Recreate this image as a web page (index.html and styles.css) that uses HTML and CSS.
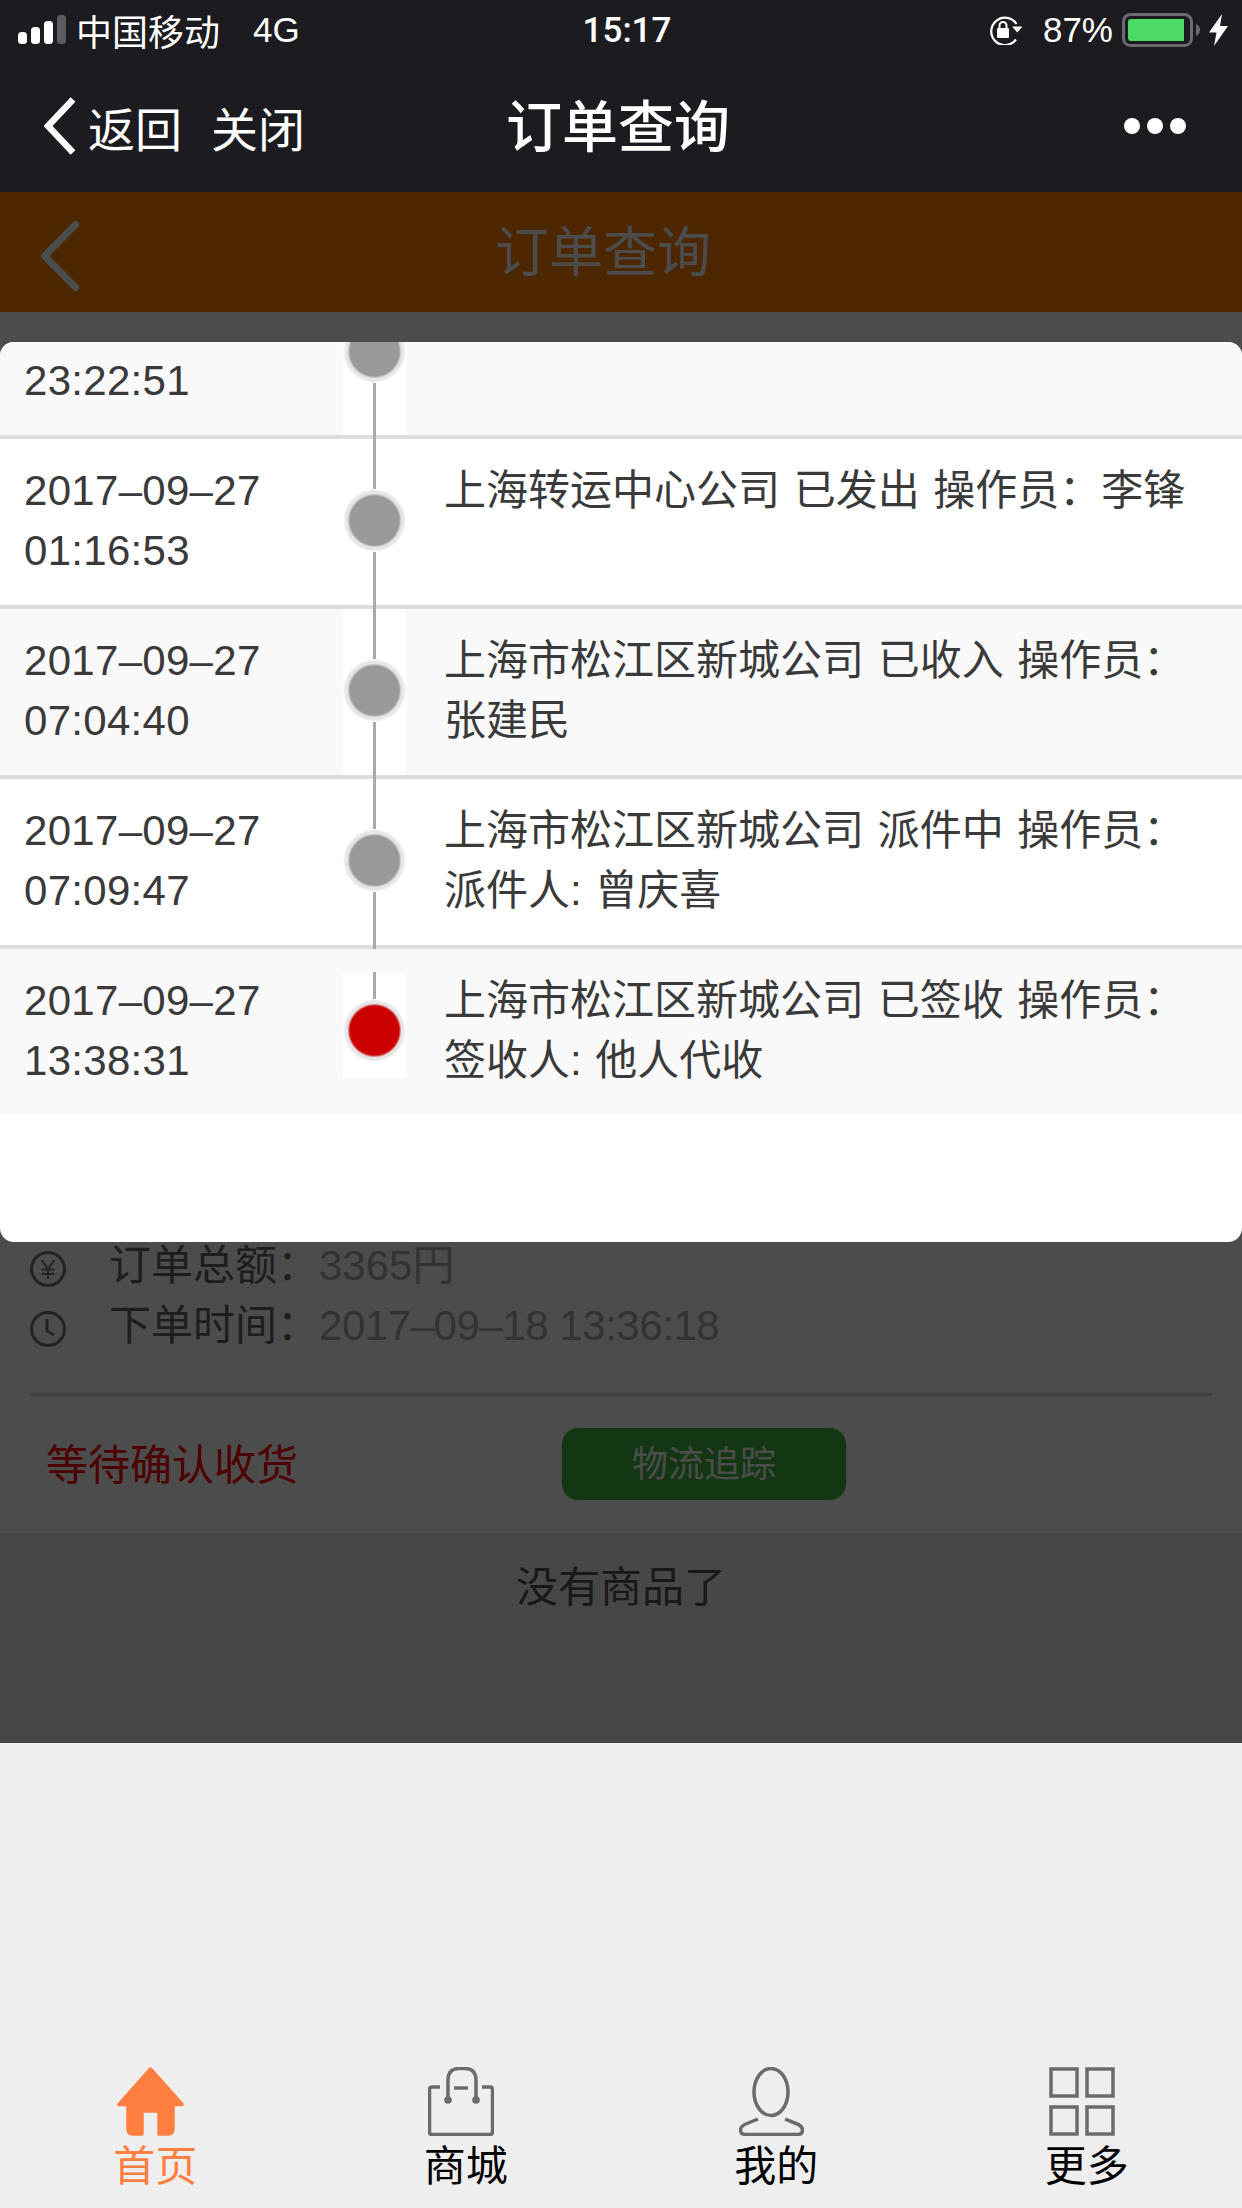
FILE: index.html
```html
<!DOCTYPE html>
<html lang="zh-CN">
<head>
    <meta charset="UTF-8">
    <meta name="viewport" content="width=device-width, initial-scale=1.0">
    <title>订单查询</title>
    <link rel="stylesheet" href="styles.css">
</head>
<body>
    <!-- 微信顶部 -->
    <div class="chrome">
        <div class="status_bar">
            <div class="status_left">
                <svg class="signal" width="48" height="30" viewBox="0 0 48 30">
                    <rect x="0" y="17" width="9" height="12" rx="3.5" fill="#fff"/>
                    <rect x="13" y="12" width="9" height="17" rx="3.5" fill="#fff"/>
                    <rect x="26" y="6" width="9" height="23" rx="3.5" fill="#fff"/>
                    <rect x="39" y="0" width="9" height="29" rx="3.5" fill="#5c5c60"/>
                </svg>
                <span class="carrier">中国移动</span>
                <span class="network">4G</span>
            </div>
            <div class="status_time">15:17</div>
            <div class="status_right">
                <svg class="rotate_lock" width="35" height="30" viewBox="0 0 35 30">
                    <path d="M28 24.5A13.7 13.7 0 1 1 28.5 9" fill="none" stroke="#fff" stroke-width="2.2"/>
                    <path d="M24 11.5h10.500l-5.200 6z" fill="#fff"/>
                    <rect x="9" y="13" width="12" height="10" rx="1" fill="#fff"/>
                    <path d="M11.500 13v-2.500a3.500 3.500 0 0 1 7 0V13" fill="none" stroke="#fff" stroke-width="2"/>
                </svg>
                <span class="battery_num">87%</span>
                <svg class="battery" width="78" height="34" viewBox="0 0 78 34">
                    <rect x="1.500" y="1.500" width="68" height="31" rx="7" fill="none" stroke="#6b6b6f" stroke-width="3"/>
                    <path d="M9 6h53v22H9a3 3 0 0 1-3-3V9a3 3 0 0 1 3-3z" fill="#4cd964"/>
                    <path d="M74 11c2.500 1 4 3 4 6s-1.500 5-4 6z" fill="#6b6b6f"/>
                </svg>
                <svg class="bolt" width="19" height="32" viewBox="0 0 19 32">
                    <path d="M13 0L0 18.500h7.500L5 32 19 12h-8z" fill="#fff"/>
                </svg>
            </div>
        </div>
        <div class="nav_bar">
            <div class="nav_left">
                <svg class="nav_back" width="32" height="58" viewBox="0 0 32 58">
                    <path d="M29 2.500L4 29l25 26.500" fill="none" stroke="#fff" stroke-width="6.500"/>
                </svg>
                <span class="nav_link back_text">返回</span>
                <span class="nav_link">关闭</span>
            </div>
            <div class="nav_title">订单查询</div>
            <div class="nav_more">
                <i></i><i></i><i></i>
            </div>
        </div>
    </div>

    <!-- 页面内容 -->
    <div class="page">
        <div class="header">
            <svg class="header_back" width="38" height="70" viewBox="0 0 38 70">
                <path d="M34.500 3.500L3.500 35l31 31.500" fill="none" stroke="#fff" stroke-width="7" stroke-linecap="round" stroke-linejoin="round"/>
            </svg>
            <div class="header_title">订单查询</div>
        </div>

        <div class="order">
            <div class="info_row">
                <svg class="info_icon" width="36" height="36" viewBox="0 0 36 36">
                    <circle cx="18" cy="18" r="16.500" fill="none" stroke="currentColor" stroke-width="3"/>
                    <path d="M11.500 9L18 18l6.500-9M18 18v10M11.500 18.500h13M11.500 23h13" fill="none" stroke="currentColor" stroke-width="2"/>
                </svg>
                <span class="info_label">订单总额：</span>
                <span class="info_value">3365円</span>
            </div>
            <div class="info_row">
                <svg class="info_icon" width="36" height="36" viewBox="0 0 36 36">
                    <circle cx="18" cy="18" r="16.500" fill="none" stroke="currentColor" stroke-width="3"/>
                    <path d="M17 8v12l7 4" fill="none" stroke="currentColor" stroke-width="3"/>
                </svg>
                <span class="info_label">下单时间：</span>
                <span class="info_value info_date">2017–09–18 13:36:18</span>
            </div>
            <div class="line"></div>
            <div class="state_row">
                <div class="state">等待确认收货</div>
                <div class="track_btn">物流追踪</div>
            </div>
        </div>

        <div class="no_more">没有商品了</div>

        <div class="tab_bar">
            <div class="tab tab_active">
                <svg class="tab_icon" width="67" height="69" viewBox="0 0 67 69">
                    <path d="M33.500 2L2 37.500h9V62q0 5 5 5h9V44h17v23h9q5 0 5-5V37.500h9z" fill="#ff7f40" stroke="#ff7f40" stroke-width="3.500" stroke-linejoin="round"/>
                </svg>
                <span>首页</span>
            </div>
            <div class="tab">
                <svg class="tab_icon" width="66" height="69" viewBox="0 0 66 69">
                    <path d="M12 20H4q-2.500 0-2.500 2.500V65q0 2.500 2.500 2.500h58q2.500 0 2.500-2.500V22.500Q64.500 20 62 20h-8M26 21h14" fill="none" stroke="#6b6b6b" stroke-width="3.500"/>
                    <path d="M20 33V13Q20 1.500 31 1.500h6Q48 1.500 48 13v20" fill="none" stroke="#6b6b6b" stroke-width="3.500"/>
                    <circle cx="20" cy="33" r="3.800" fill="#6b6b6b"/>
                    <circle cx="48" cy="33" r="3.800" fill="#6b6b6b"/>
                </svg>
                <span>商城</span>
            </div>
            <div class="tab">
                <svg class="tab_icon" width="65" height="69" viewBox="0 0 65 69">
                    <ellipse cx="32" cy="25" rx="17" ry="23.500" fill="none" stroke="#6b6b6b" stroke-width="3.500"/>
                    <path d="M19 52l-11 4.500Q1.500 59 1.500 63q0 4.500 5 4.500h52q5 0 5-4.500 0-4-6.500-6.500L46 52" fill="none" stroke="#6b6b6b" stroke-width="3.500"/>
                </svg>
                <span>我的</span>
            </div>
            <div class="tab">
                <svg class="tab_icon" width="66" height="69" viewBox="0 0 66 69">
                    <rect x="2" y="2" width="26" height="27" fill="none" stroke="#6b6b6b" stroke-width="3.500"/>
                    <rect x="38" y="2" width="26" height="27" fill="none" stroke="#6b6b6b" stroke-width="3.500"/>
                    <rect x="2" y="40" width="26" height="27" fill="none" stroke="#6b6b6b" stroke-width="3.500"/>
                    <rect x="38" y="40" width="26" height="27" fill="none" stroke="#6b6b6b" stroke-width="3.500"/>
                </svg>
                <span>更多</span>
            </div>
        </div>
    </div>

    <!-- 遮罩 + 物流弹窗 -->
    <div class="mask">
        <div class="dialog">
            <div class="row row_first row_gray">
                <div class="row_time">23:22:51</div>
                <div class="axis">
                    <div class="dot"></div>
                    <div class="seg seg_down"></div>
                </div>
                <div class="row_text"></div>
            </div>
            <div class="row">
                <div class="row_time">2017–09–27<br>01:16:53</div>
                <div class="axis">
                    <div class="seg seg_up"></div>
                    <div class="dot"></div>
                    <div class="seg seg_down"></div>
                </div>
                <div class="row_text">上海转运中心公司 已发出 操作员：李锋</div>
            </div>
            <div class="row row_gray">
                <div class="row_time">2017–09–27<br>07:04:40</div>
                <div class="axis">
                    <div class="seg seg_up"></div>
                    <div class="dot"></div>
                    <div class="seg seg_down"></div>
                </div>
                <div class="row_text">上海市松江区新城公司 已收入 操作员：张建民</div>
            </div>
            <div class="row">
                <div class="row_time">2017–09–27<br>07:09:47</div>
                <div class="axis">
                    <div class="seg seg_up"></div>
                    <div class="dot"></div>
                    <div class="seg seg_down"></div>
                </div>
                <div class="row_text">上海市松江区新城公司 派件中 操作员：派件人: 曾庆喜</div>
            </div>
            <div class="row row_last row_gray">
                <div class="row_time">2017–09–27<br>13:38:31</div>
                <div class="axis">
                    <div class="seg seg_end"></div>
                    <div class="dot dot_red"></div>
                </div>
                <div class="row_text">上海市松江区新城公司 已签收 操作员：签收人: 他人代收</div>
            </div>
        </div>
    </div>
</body>
</html>
```

FILE: styles.css
```css
* {
    box-sizing: border-box;
}
body {
    position: relative;
    width: 1242px;
    height: 2208px;
    margin: 0;
    overflow: hidden;
    display: flex;
    flex-direction: column;
    background-color: #eee;
    font-family: "Liberation Sans", "Noto Sans CJK SC", sans-serif;
    font-size: 42px;
    color: #333;
}
svg {
    display: block;
    flex-shrink: 0;
}

/* 微信顶部 */
.chrome {
    height: 192px;
    flex-shrink: 0;
    background-color: #1b1b20;
    color: #fff;
}
.status_bar {
    display: flex;
    align-items: center;
    height: 60px;
    padding: 0 14px 0 18px;
}
.status_left,
.status_right {
    flex: 1;
    display: flex;
    align-items: center;
}
.status_right {
    justify-content: flex-end;
}
.carrier {
    margin-left: 10px;
    font-size: 36px;
}
.network {
    margin-left: 33px;
    font-size: 35px;
}
.status_time {
    margin-left: 8px;
    font-family: Roboto, sans-serif;
    font-size: 35px;
    font-weight: 500;
}
.battery_num {
    margin: 0 9px 0 20px;
    font-size: 35px;
}
.bolt {
    margin-left: 9px;
}
.nav_bar {
    position: relative;
    display: flex;
    align-items: center;
    justify-content: space-between;
    height: 132px;
    padding: 0 56px 0 44px;
}
.nav_left {
    display: flex;
    align-items: center;
}
.nav_link {
    margin-left: 29px;
    font-size: 47px;
}
.back_text {
    margin-left: 12px;
}
.nav_title {
    position: absolute;
    left: 0;
    right: 0;
    padding: 0 6px 8px 0;
    text-align: center;
    font-size: 56px;
    font-weight: 500;
}
.nav_more {
    display: flex;
    gap: 7px;
}
.nav_more i {
    width: 16px;
    height: 16px;
    border-radius: 50%;
    background-color: #fff;
}

/* 页面内容 */
.page {
    flex: 1;
    display: flex;
    flex-direction: column;
}
.header {
    display: flex;
    align-items: center;
    height: 120px;
    padding: 0 115px 0 41px;
    background-color: #ff8207;
    color: #fff;
}
.header_back {
    margin-top: 8px;
}
.header_title {
    flex: 1;
    padding-bottom: 8px;
    text-align: center;
    font-size: 54px;
}
.order {
    height: 1221px;
    display: flex;
    flex-direction: column;
    justify-content: flex-end;
    padding: 0 30px 33px;
    background-color: #fff;
}
.info_row {
    display: flex;
    align-items: center;
    height: 60px;
    line-height: 60px;
}
.info_icon {
    margin-top: 6px;
    color: #777;
}
.info_label {
    margin-left: 43px;
    color: #666;
}
.info_value {
    color: #aaa;
}
.info_date {
    letter-spacing: -.45px;
}
.line {
    height: 3px;
    margin: 37px 0 32px;
    background-color: #d5d5d5;
}
.state_row {
    display: flex;
    align-items: center;
    height: 72px;
}
.state {
    width: 532px;
    padding: 0 0 5px 16px;
    color: #ff0000;
}
.track_btn {
    width: 284px;
    height: 72px;
    line-height: 74px;
    text-align: center;
    font-size: 36px;
    color: #fff;
    border-radius: 16px;
    background-color: #42b442;
}
.no_more {
    height: 210px;
    padding-top: 25px;
    line-height: 60px;
    text-align: center;
    color: #555;
}
.tab_bar {
    margin-top: auto;
    display: flex;
    height: 141px;
}
.tab {
    flex: 1;
    display: flex;
    flex-direction: column;
    align-items: center;
    font-size: 42px;
    line-height: 61px;
    color: #000;
}
.tab_active {
    color: #ff7f40;
}
.tab_icon {
    margin-right: 9px;
}

/* 遮罩 */
.mask {
    position: absolute;
    top: 192px;
    left: 0;
    width: 100%;
    height: 1551px;
    padding-top: 150px;
    background-color: rgba(0, 0, 0, .7);
}
.dialog {
    height: 900px;
    overflow: hidden;
    border-radius: 14px;
    background-color: #fff;
}
.row {
    display: flex;
    height: 170px;
    line-height: 60px;
    color: #3a3a3a;
    border-bottom: 4px solid #ddd;
}
.row_gray {
    background-color: #f9f9f9;
}
.row_first {
    height: 97px;
}
.row_last {
    height: 166px;
    border-bottom: 0;
}
.row_time {
    width: 343px;
    padding: 22px 0 0 24px;
    flex-shrink: 0;
    letter-spacing: .3px;
}
.row_first .row_time {
    padding-top: 9px;
}
.row_text {
    flex: 1;
    padding: 22px 52px 0 38px;
    word-spacing: 2px;
}
.axis {
    width: 63px;
    flex-shrink: 0;
    display: flex;
    flex-direction: column;
    align-items: center;
    background-color: #fff;
}
.row_last .axis {
    height: 105px;
    margin-top: 23px;
}
.seg {
    width: 3px;
    flex-shrink: 0;
    background-color: #aaa;
}
.seg_up {
    height: 50px;
}
/* 多出来的 4px 压在分隔线上 */
.seg_down {
    height: 57px;
}
.seg_end {
    height: 27px;
}
.dot {
    width: 63px;
    height: 63px;
    flex-shrink: 0;
    background: radial-gradient(circle closest-side, #999 0, #999 24.5px, #e6e6e6 27px, #e6e6e6 29px, rgba(230, 230, 230, 0) 31.5px);
}
.row_first .dot {
    margin-top: -22px;
}
.dot_red {
    background: radial-gradient(circle closest-side, #c00 0, #c00 24.5px, #e6e6e6 27px, #e6e6e6 29px, rgba(230, 230, 230, 0) 31.5px);
}
```
